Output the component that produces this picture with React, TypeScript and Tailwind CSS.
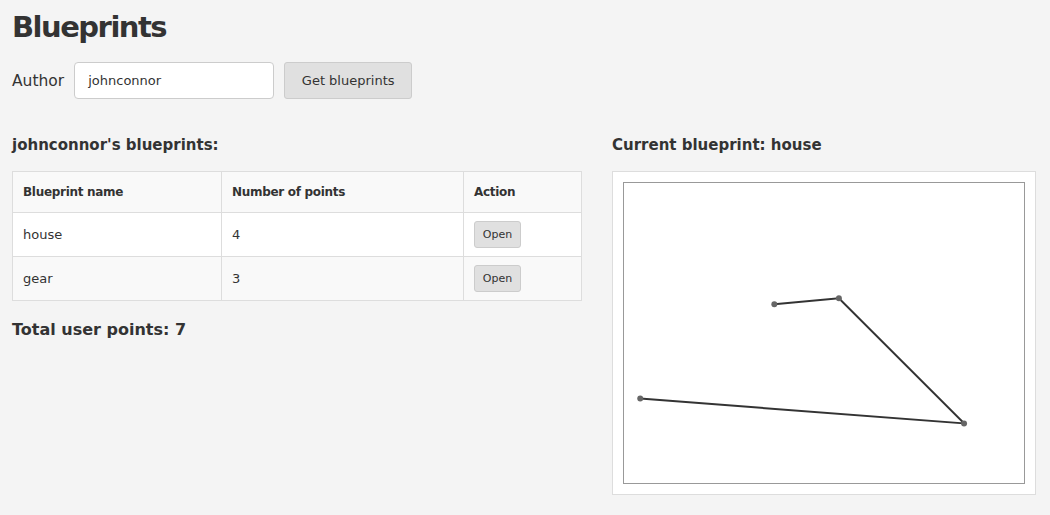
import React from "react";

const pts = [
  [150, 121],
  [215, 115],
  [341, 241],
  [15, 216],
];

export default function App() {
  const font = { fontFamily: '"Comic Sans MS", "DejaVu Sans", sans-serif' };
  return (
    <div className="min-h-[515px] w-[1050px] bg-[#f4f4f4] text-[#333] px-[12px]" style={font}>
      <h1 className="text-[29px] font-bold leading-[36px] pt-[9px] m-0 tracking-[-1.5px]">Blueprints</h1>
      <div className="flex items-center mt-[17px] h-[37px]">
        <span className="text-[15.5px] mr-[10px] pt-[2px]">Author</span>
        <div className="w-[200px] h-[37px] bg-white border border-[#ccc] rounded-[4px] flex items-center px-[13px] text-[13px]">
          johnconnor
        </div>
        <button className="ml-[10px] w-[128px] h-[37px] bg-[#e0e0e0] border border-[#ccc] rounded-[3px] text-[13px] text-[#333]" style={font}>
          Get blueprints
        </button>
      </div>
      <div className="flex mt-[35px]">
        <div className="w-[570px]">
          <h4 className="text-[15px] font-bold leading-[22px] m-0">johnconnor's blueprints:</h4>
          <table className="mt-[15px] w-[570px] border-collapse text-[13px]">
            <thead>
              <tr className="h-[41px] bg-[#f9f9f9]">
                <th className="border border-[#ddd] text-left font-bold px-[10px] w-[209px] text-[12px] tracking-[-0.3px]">Blueprint name</th>
                <th className="border border-[#ddd] text-left font-bold px-[10px] w-[242px] text-[12px] tracking-[-0.3px]">Number of points</th>
                <th className="border border-[#ddd] text-left font-bold px-[10px] text-[12px] tracking-[-0.3px]">Action</th>
              </tr>
            </thead>
            <tbody>
              {[
                ["house", "4", "bg-white"],
                ["gear", "3", "bg-[#f9f9f9]"],
              ].map(([n, p, bg]) => (
                <tr key={n} className={`h-[44px] ${bg}`}>
                  <td className="border border-[#ddd] px-[10px]">{n}</td>
                  <td className="border border-[#ddd] px-[10px]">{p}</td>
                  <td className="border border-[#ddd] px-[10px]">
                    <button className="w-[47px] h-[27px] bg-[#e0e0e0] border border-[#ccc] rounded-[3px] text-[11px] text-[#333] pt-[2px]" style={font}>
                      Open
                    </button>
                  </td>
                </tr>
              ))}
            </tbody>
          </table>
          <h4 className="text-[16px] font-bold leading-[22px] mt-[18px] m-0">Total user points: 7</h4>
        </div>
        <div className="ml-[30px] w-[424px]">
          <h4 className="text-[15px] font-bold leading-[22px] m-0">Current blueprint: house</h4>
          <div className="mt-[15px] bg-white border border-[#ddd] p-[10px] w-[424px] h-[324px]">
            <svg width="402" height="302" className="block border border-[#999]" viewBox="-1 -1 402 302">
              <polyline
                points={pts.map((p) => p.join(",")).join(" ")}
                fill="none"
                stroke="#333"
                strokeWidth="2"
              />
              {pts.map(([x, y], i) => (
                <circle key={i} cx={x} cy={y} r="3" fill="#666" />
              ))}
            </svg>
          </div>
        </div>
      </div>
    </div>
  );
}
